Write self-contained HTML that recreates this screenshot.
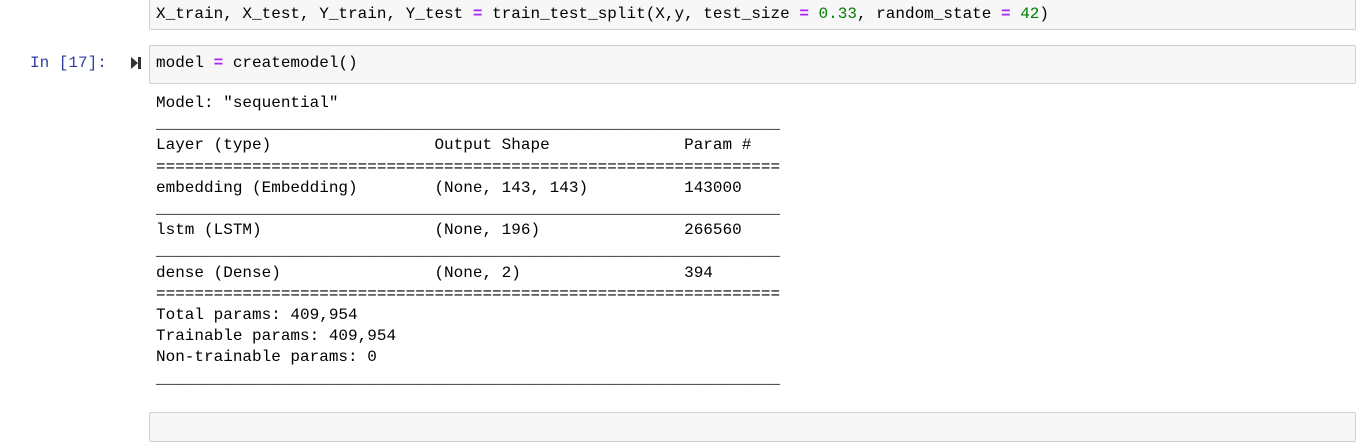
<!DOCTYPE html>
<html><head><style>
body{margin:0;background:#fff;width:1372px;height:422px;overflow:hidden;position:relative;font-family:"Liberation Mono",monospace;}
.cell{position:absolute;left:149px;width:1207px;background:#f7f7f7;border:1px solid #cfcfcf;border-radius:2px;box-sizing:border-box;}
.code{position:absolute;left:156px;font-size:16px;line-height:21px;white-space:pre;color:#000;}
.o{color:#aa22ff;font-weight:bold}
.n{color:#008000}
pre{margin:0;font-family:"Liberation Mono",monospace;font-size:16px;line-height:21.2px;position:absolute;left:156px;top:93px;color:#000;}
</style></head><body>
<div class="cell" style="top:-5px;height:35px"></div>
<div class="code" style="top:4px">X_train, X_test, Y_train, Y_test <span class="o">=</span> train_test_split(X,y, test_size <span class="o">=</span> <span class="n">0.33</span>, random_state <span class="o">=</span> <span class="n">42</span>)</div>
<div style="position:absolute;left:30px;top:53px;font-size:16px;line-height:21px;color:#303f9f;white-space:pre">In [17]:</div>
<svg style="position:absolute;left:130px;top:56px" width="12" height="14"><polygon points="1,1 8,7 1,13" fill="#333"/><rect x="8" y="1" width="3" height="12" fill="#333"/></svg>
<div class="cell" style="top:45px;height:39px"></div>
<div class="code" style="top:53px">model <span class="o">=</span> createmodel()</div>
<pre>Model: "sequential"
_________________________________________________________________
Layer (type)                 Output Shape              Param #   
=================================================================
embedding (Embedding)        (None, 143, 143)          143000    
_________________________________________________________________
lstm (LSTM)                  (None, 196)               266560    
_________________________________________________________________
dense (Dense)                (None, 2)                 394       
=================================================================
Total params: 409,954
Trainable params: 409,954
Non-trainable params: 0
_________________________________________________________________</pre>
<div class="cell" style="top:412px;height:30px"></div>
</body></html>
